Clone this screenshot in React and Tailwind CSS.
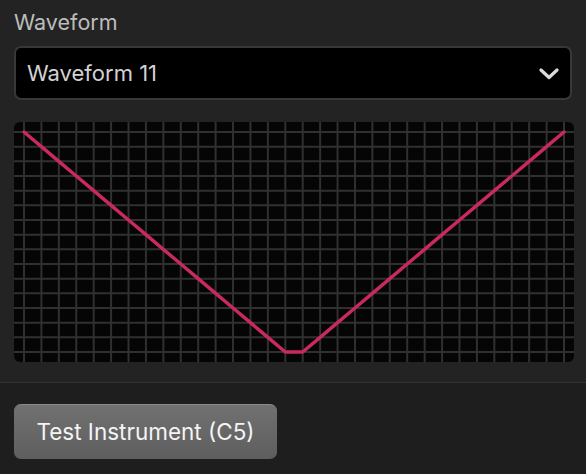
import React from "react";

const W = 560;
const H = 240;
const PAD = 10;
const COLS = 32;
const ROWS = 16;

function Scope() {
  const xs = Array.from({ length: COLS }, (_, i) => PAD + (i * (W - 2 * PAD)) / (COLS - 1));
  const ys = Array.from({ length: ROWS }, (_, j) => PAD + (j * (H - 2 * PAD)) / (ROWS - 1));
  const pts = xs.map((x, i) => {
    const k = i <= 15 ? i : 31 - i;
    return `${x.toFixed(2)},${(PAD + (k * (H - 2 * PAD)) / 15).toFixed(2)}`;
  });
  return (
    <svg width={W} height={H} viewBox={`0 0 ${W} ${H}`} className="block">
      {xs.map((x, i) => (
        <line key={"v" + i} x1={x} y1={0} x2={x} y2={H} stroke="#303030" strokeWidth="2" />
      ))}
      {ys.map((y, j) => (
        <line key={"h" + j} x1={0} y1={y} x2={W} y2={y} stroke="#303030" strokeWidth="2" />
      ))}
      <polyline
        points={pts.join(" ")}
        fill="none"
        stroke="#c92a5e"
        strokeWidth="3.4"
        strokeLinejoin="round"
        strokeLinecap="round"
      />
    </svg>
  );
}

export default function App() {
  return (
    <div
      className="w-[586px] h-[474px] bg-[#232323] flex flex-col overflow-hidden"
      style={{ fontFamily: "Inter, 'Noto Sans', sans-serif" }}
    >
      <div className="px-[14px] pt-[9px]">
        <div className="text-[21.5px] leading-[26px] text-[#bdbdbd]">Waveform</div>
        <div className="mt-[11px] h-[54px] rounded-[7px] border-2 border-[#383838] bg-black flex items-center justify-between pl-[11px] pr-[11px]">
          <span className="text-[22px] text-[#d2d2d2]">Waveform 11</span>
          <svg width="20" height="12" viewBox="0 0 20 12" className="mt-[1px]">
            <path d="M2 2 L10 9.5 L18 2" fill="none" stroke="#dcdcdc" strokeWidth="3.2" strokeLinecap="round" strokeLinejoin="round" />
          </svg>
        </div>
        <div className="mt-[22px] w-[560px] h-[240px] rounded-[6px] overflow-hidden bg-[#050505]">
          <Scope />
        </div>
      </div>
      <div className="mt-[20px] h-px bg-[#333333]" />
      <div className="flex-1 bg-[#1e1e1e] px-[14px] pt-[21px]">
        <button className="w-[263px] h-[55px] rounded-[7px] border-t border-[#8a8a8a] bg-gradient-to-b from-[#717171] to-[#5e5e5e] text-[22.5px] text-[#f4f4f4] flex items-center justify-center">
          Test Instrument (C5)
        </button>
      </div>
    </div>
  );
}
